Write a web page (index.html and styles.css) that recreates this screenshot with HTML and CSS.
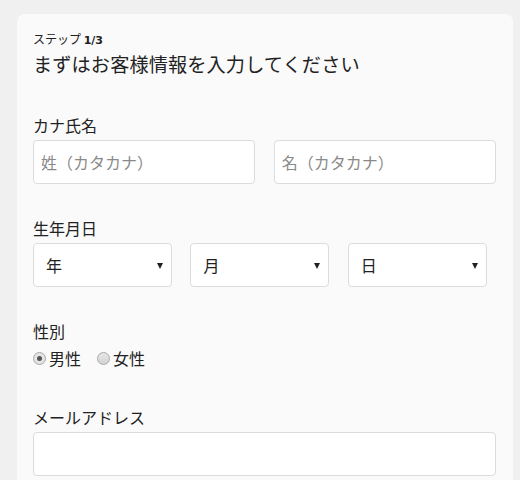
FILE: index.html
```html
<!DOCTYPE html>
<html lang="ja">
<head>
<meta charset="utf-8">
<title>お客様情報</title>
<link rel="stylesheet" href="styles.css">
</head>
<body>
<main class="card">
  <p class="step">ステップ <b>1/3</b></p>
  <h1 class="title">まずはお客様情報を入力してください</h1>

  <div class="field">
    <label class="label">カナ氏名</label>
    <div class="row-name">
      <input class="input half" type="text" placeholder="姓（カタカナ）">
      <input class="input half" type="text" placeholder="名（カタカナ）">
    </div>
  </div>

  <div class="field">
    <label class="label">生年月日</label>
    <div class="row-date">
      <div class="select"><span>年</span></div>
      <div class="select"><span>月</span></div>
      <div class="select"><span>日</span></div>
    </div>
  </div>

  <div class="field">
    <label class="label">性別</label>
    <div class="radios">
      <label class="radio"><span class="dot checked"></span>男性</label>
      <label class="radio"><span class="dot"></span>女性</label>
    </div>
  </div>

  <div class="field email">
    <label class="label">メールアドレス</label>
    <input class="input full" type="text">
  </div>
</main>
</body>
</html>
```

FILE: styles.css
```css
html, body {
  height: 100%;
}
body {
  margin: 14px 7px 0 17px;
  background: #f0f0f0;
  font-family: "Noto Sans CJK JP", "Noto Sans", sans-serif;
  color: #222;
  overflow: hidden;
}
.card {
  background: #fafafa;
  border-radius: 8px 8px 0 0;
  padding: 16px 17px 40px 16px;
  min-height: 500px;
}
.step {
  margin: 0;
  font-size: 12px;
  line-height: 18px;
}
.step b {
  font-family: "DejaVu Sans", sans-serif;
  font-size: 11px;
}
.title {
  margin: 0;
  font-size: 19.2px;
  letter-spacing: 0.1px;
  font-weight: normal;
  line-height: 28px;
}
.field {
  margin-top: 35px;
}
.field + .field {
  margin-top: 32px;
}
.field.email {
  margin-top: 35px;
}
.label {
  display: block;
  font-size: 16px;
  line-height: 24px;
  margin-bottom: 3px;
}
.row-name {
  display: flex;
  justify-content: space-between;
}
.input {
  box-sizing: border-box;
  height: 44px;
  border: 1px solid #dcdcdc;
  border-radius: 4px;
  background: #fff;
  padding: 0 7px;
  font-family: inherit;
  font-size: 16px;
  color: #222;
  outline: none;
}
.input::placeholder {
  color: #8a8a8a;
}
.half {
  width: 48%;
}
.full {
  width: 100%;
  display: block;
}
.row-date {
  display: flex;
}
.select {
  box-sizing: border-box;
  flex: 0 0 30%;
  margin-right: 4%;
  height: 44px;
  border: 1px solid #dcdcdc;
  border-radius: 4px;
  background: #fff;
  display: flex;
  align-items: center;
  padding-left: 12px;
  font-size: 16px;
  position: relative;
}
.select::after {
  content: "";
  position: absolute;
  right: 8px;
  top: 19px;
  border-left: 3px solid transparent;
  border-right: 3px solid transparent;
  border-top: 6px solid #222;
}
.radios {
  display: flex;
  gap: 16px;
  font-size: 16px;
  line-height: 24px;
}
.radio {
  display: flex;
  align-items: center;
}
.dot {
  box-sizing: border-box;
  width: 13px;
  height: 13px;
  border-radius: 50%;
  border: 1px solid #a8a8a8;
  background: linear-gradient(#e6e6e6, #d4d4d4);
  margin-right: 3px;
  position: relative;
}
.dot.checked {
  background: #e4e4e4;
}
.dot.checked::after {
  content: "";
  position: absolute;
  left: 3px;
  top: 3px;
  width: 5px;
  height: 5px;
  border-radius: 50%;
  background: #555;
}
```
